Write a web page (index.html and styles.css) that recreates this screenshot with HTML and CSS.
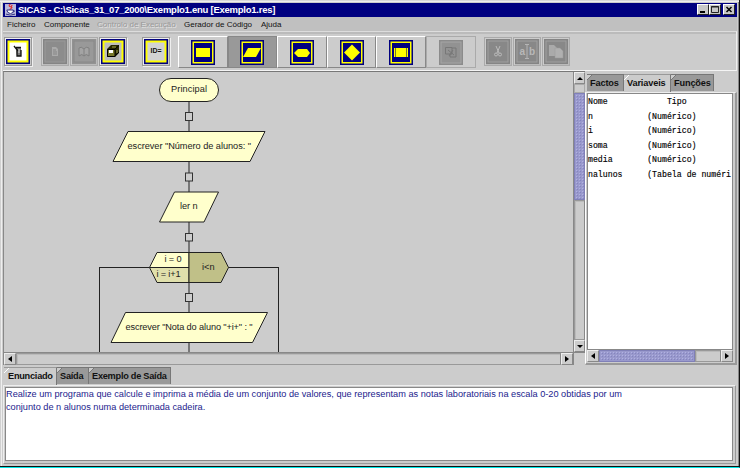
FILE: index.html
```html
<!DOCTYPE html>
<html lang="pt">
<head>
<meta charset="utf-8">
<title>SICAS</title>
<link rel="stylesheet" href="styles.css">
</head>
<body>
<div class="window">
  <header class="titlebar">
    <svg class="logo" width="12" height="13" viewBox="0 0 12 13"><rect width="12" height="13" fill="#b9b9dc"/><path d="M6 0Q3 2 6 3T5 6M8 1Q6 3 8 4" fill="none" stroke="#e03030" stroke-width="1.2"/><path d="M2 6.500H9V9Q6 12 3 9ZM9 7Q12 7 9 9M1 11Q6 13 11 11" fill="#fff" stroke="#22227c"/></svg>
    <h1>SICAS - C:\Sicas_31_07_2000\Exemplo1.enu [Exemplo1.res]</h1>
    <div class="controls">
      <button><svg width="10" height="9"><path d="M2 7H7" stroke="#000" stroke-width="2"/></svg></button>
      <button><svg width="10" height="9"><path d="M1.500 1.500H8.500V7.500H1.500ZM1 2H9" fill="none" stroke="#222"/></svg></button>
      <button class="close"><svg width="10" height="9"><path d="M2.500 2L7.500 7M7.500 2L2.500 7" stroke="#000" stroke-width="1.500"/></svg></button>
    </div>
  </header>
  <nav class="menu"><span class="m1">Ficheiro</span><span class="m2">Componente</span><span class="m3 off">Controlo de Execução</span><span class="m4">Gerador de Código</span><span>Ajuda</span></nav>

  <div class="toolbar">
    <button class="tool"><svg width="24" height="25"><rect width="24" height="25" fill="#000080"/><rect x="1.500" y="1.500" width="21" height="22" fill="#ff0"/><rect x="3.500" y="3.500" width="17" height="18" fill="#fff"/><path d="M10 9H15V17H11Z" fill="#777"/><path d="M8 7L12 12M10 8.500H15M11 10V17H15V11" stroke="#111" stroke-width="1.300" fill="none"/><path d="M12 11H14M12 13H14" stroke="#ddd"/></svg></button>
    <button class="tool off g1"><svg width="24" height="25"><rect width="24" height="25" fill="#848484"/><rect x="2" y="2" width="20" height="21" fill="#8c8c8c" stroke="#999"/><path d="M9 8H13L15 10V17H9Z" fill="#aaa"/><path d="M10 11H13M10 13H14M10 15H14" stroke="#858585"/></svg></button>
    <button class="tool off g2"><svg width="24" height="25"><rect width="24" height="25" fill="#929292"/><rect x="2" y="2" width="20" height="21" fill="#999" stroke="#898989"/><path d="M7 9Q9 7 12 10Q14 7 17 9V17Q14 14 12 17Q10 14 7 17ZM12 10V17" fill="#a4a4a4" stroke="#808080"/></svg></button>
    <button class="tool g2"><svg width="24" height="25"><rect width="24" height="25" fill="#000080"/><rect x="1.500" y="1.500" width="21" height="22" fill="#ff0"/><rect x="3.500" y="3.500" width="17" height="18" fill="#bdbdbd"/><path d="M6 10L10 6H18V14L14 18H6Z" fill="#282800"/><path d="M6.500 10.500H14V17.500H6.500ZM14 10L18 6.500M14 17L18 13" fill="#77772a" stroke="#000"/><path d="M8 11H12V14H8Z" fill="#fff"/><path d="M11 8H15M16 11V14" stroke="#a0a050"/></svg></button>
    <button class="tool g3"><svg width="24" height="25"><rect width="24" height="25" fill="#000080"/><rect x="1.500" y="1.500" width="21" height="22" fill="#ff0"/><rect x="3.500" y="3.500" width="17" height="18" fill="#d2d2d2"/><text x="6.500" y="14" class="idtext" textLength="11" lengthAdjust="spacingAndGlyphs">ID=</text></svg></button>

    <div class="shapes">
      <button class="shape"><svg width="24" height="25"><rect width="24" height="25" fill="#000080"/><rect x="2.250" y="2.250" width="19.500" height="20.500" fill="none" stroke="#ff0" stroke-width="1.500"/><path d="M5 8H19V17H5Z" fill="#ff0"/></svg></button>
      <button class="shape pressed"><svg width="24" height="25"><rect width="24" height="25" fill="#000080"/><rect x="2.250" y="2.250" width="19.500" height="20.500" fill="none" stroke="#ff0" stroke-width="1.500"/><path d="M8 8H21L16 17H3Z" fill="#ff0"/></svg></button>
      <button class="shape"><svg width="24" height="25"><rect width="24" height="25" fill="#000080"/><rect x="2.250" y="2.250" width="19.500" height="20.500" fill="none" stroke="#ff0" stroke-width="1.500"/><path d="M4 13L8 9H17L20 13L17 17H8Z" fill="#ff0"/></svg></button>
      <button class="shape"><svg width="24" height="25"><rect width="24" height="25" fill="#000080"/><rect x="2.250" y="2.250" width="19.500" height="20.500" fill="none" stroke="#ff0" stroke-width="1.500"/><path d="M12 4.500L20 12.500L12 20.500L4 12.500Z" fill="#ff0"/></svg></button>
      <button class="shape"><svg width="24" height="25"><rect width="24" height="25" fill="#000080"/><rect x="2.250" y="2.250" width="19.500" height="20.500" fill="none" stroke="#ff0" stroke-width="1.500"/><path d="M5 8H19V17H5Z" fill="#ff0"/><path d="M6.500 8V17M17.500 8V17" stroke="#77772a"/></svg></button>
      <button class="shape flat"><svg width="24" height="25"><rect width="24" height="25" fill="#8b8b8b"/><rect x="2" y="2" width="20" height="21" fill="#929292" stroke="#a5a5a5"/><path d="M6.500 7.500H13V14H6.500ZM13 8H17V17H11V14M9 10L15 15M14 10L10 16" fill="none" stroke="#777"/></svg></button>
    </div>

    <button class="tool off g4"><svg width="24" height="25"><rect width="24" height="25" fill="#848484"/><rect x="2" y="2" width="20" height="21" fill="#888" stroke="#a0a0a0"/><path d="M10 7L13 14M14 7L11 14" stroke="#bbb" fill="none"/><circle cx="10" cy="15.500" r="1.500" fill="none" stroke="#bbb"/><circle cx="14" cy="15.500" r="1.500" fill="none" stroke="#bbb"/></svg></button>
    <button class="tool off g2"><svg width="24" height="25"><rect width="24" height="25" fill="#848484"/><rect x="2" y="2" width="20" height="21" fill="#888" stroke="#a0a0a0"/><text x="4.500" y="16" class="abtext">a</text><text x="14" y="16" class="abtext">b</text><path d="M10 5.500H14M12 5.500V19.500M10 19.500H14" stroke="#b5b5b5"/></svg></button>
    <button class="tool off g5"><svg width="24" height="25"><rect width="24" height="25" fill="#848484"/><rect x="2" y="2" width="20" height="21" fill="#888" stroke="#a0a0a0"/><path d="M5 6H10L13 9V17H5Z" fill="#aaa"/><path d="M11 9H16L19 12V19H11Z" fill="#b0b0b0" stroke="#999" stroke-width=".5"/></svg></button>
  </div>

  <main class="work">
    <section class="editor">
      <svg class="flow" width="569" height="280" viewBox="4 72 569 280">
        <g class="wire"><path d="M189 101V352"/><path class="crisp" d="M99.500 352V267.500H150M228 267.500H278.500V352"/></g>
        <g class="node">
          <rect x="159.500" y="78.500" width="59" height="23" rx="11.500"/>
          <path d="M128 131.500H265L250 161.500H113Z"/>
          <path d="M174.500 192H218.500L204 222H159.500Z"/>
          <path d="M125.500 312.500H267.500L252.500 342.500H111Z"/>
          <path d="M157 252.500H189V267.500H149.500Z"/>
          <path class="mid" d="M149.500 267.500H189V282.500H157Z"/>
          <path class="dark" d="M189 252.500H221L228.500 267.500L221 282.500H189Z"/>
        </g>
        <g class="joint"><rect x="185.500" y="112.500" width="7" height="8"/><rect x="185.500" y="173" width="7" height="8"/><rect x="185.500" y="233.500" width="7" height="7.500"/><rect x="185.500" y="293.500" width="7" height="8"/></g>
        <g class="label">
          <text x="171" y="92" textLength="36">Principal</text>
          <text x="127.500" y="149" textLength="123.500">escrever "Número de alunos: "</text>
          <text x="180" y="209" textLength="17.500">ler n</text>
          <text x="164.500" y="262" textLength="17">i = 0</text>
          <text x="156.500" y="277" textLength="24">i = i+1</text>
          <text x="202" y="269.500" textLength="12.500">i&lt;n</text>
          <text x="125.500" y="330" textLength="127">escrever "Nota do aluno "+i+" : "</text>
        </g>
      </svg>
      <div class="vbar"><i class="arrow up"></i><i class="gap"></i><i class="thumb"></i><i class="track"></i><i class="arrow down"></i></div>
      <div class="hbar"><i class="arrow left"></i><i class="track"></i><i class="arrow right"></i></div>
      <div class="corner"></div>
    </section>

    <aside class="side">
      <div class="tabs"><span class="tab t1">Factos</span><span class="tab on t2">Variaveis</span><span class="tab t3">Funções</span></div>
      <div class="sheet">
        <div class="list">
<pre>Nome            <b class="tipo">Tipo</b>
n           (Numérico)
i           (Numérico)
soma        (Numérico)
media       (Numérico)
nalunos     (Tabela de numéri</pre>
        </div>
        <div class="hbar"><i class="arrow left"></i><i class="thumb"></i><i class="track"></i><i class="arrow right"></i></div>
      </div>
    </aside>
  </main>

  <section class="output">
    <div class="tabs"><span class="tab on b1">Enunciado</span><span class="tab b2">Saída</span><span class="tab b3">Exemplo de Saída</span></div>
    <div class="sheet"><p>Realize um programa que calcule e imprima a média de um conjunto de valores, que representam as notas laboratoriais na escala 0-20 obtidas por um<br>conjunto de n alunos numa determinada cadeira.</p></div>
  </section>
</div>
</body>
</html>
```
FILE: styles.css
```css
* { box-sizing: border-box; }
body { margin: 0; width: 742px; height: 469px; overflow: hidden; background: #fff; font-family: "Liberation Sans", Arial, sans-serif; font-size: 9px; color: #111; }
button { margin: 0; padding: 0; font: inherit; }
svg { display: block; flex: none; }

.window { width: 740px; height: 468px; display: flex; flex-direction: column; background: #ccc; padding: 3px 2px 0 3px; border-right: 1px solid #111; border-bottom: 1px solid #00e8e8; box-shadow: inset 0 -1px #111, inset 0 1px #d8d8d8, inset 0 2px #eee, inset -1px 0 #888, inset 1px 0 #d0d0d0, inset 2px 0 #eee; }

.titlebar { height: 14px; flex: none; display: flex; align-items: center; background: #000080; padding: 0 2px 1px 2px; }
.logo { width: 11px; height: 12px; }
.titlebar h1 { margin: 0 auto 0 2px; color: #fff; font-size: 9.5px; line-height: 13px; font-weight: bold; white-space: pre; letter-spacing: -.25px; }
.controls { display: flex; }
.controls button { width: 12px; height: 11px; background: #c8c8c8; border: 1px solid; border-color: #fff #222 #222 #fff; }
.controls .close { margin-left: 2px; }

.menu { height: 14px; flex: none; display: flex; padding-left: 4px; background: #c0c0c0; font-size: 8px; line-height: 15px; white-space: pre; }
.menu .m1 { width: 37px; }
.menu .m2 { width: 53px; }
.menu .m3 { width: 87px; }
.menu .m4 { width: 77px; }
.menu .off { color: #999; text-shadow: 1px 1px #e4e4e4; }

.toolbar { height: 40px; flex: none; display: flex; align-items: flex-start; padding: 4px 0 0 1px; border-top: 1px solid #ddd; border-right: 1px solid #eee; border-bottom: 1px solid #f4f4f4; box-shadow: inset 0 2px #bbb; }
.tool { width: 28px; height: 29px; margin-top: 1px; display: grid; place-items: center; background: #c8c8c8; border: 1px solid #999; box-shadow: inset 1px 1px #eee, 1px 1px #eee; }
.tool.off { background: #bbb; border-color: #aaa; box-shadow: inset 1px 1px #ccc; }
.g1 { margin-left: 9px; }
.g2 { margin-left: 1px; }
.g3 { margin-left: 15px; }
.g4 { margin-left: 8px; }
.g5 { margin-left: 1px; }
.idtext { font-size: 7px; font-weight: bold; fill: #111; }
.abtext { font-size: 10px; font-weight: bold; fill: #b8b8b8; }
.shapes { display: flex; margin-left: 8px; }
.shape { width: 49.6px; height: 32px; display: grid; place-items: center; background: #ccc; border: 1px solid; border-color: #fff #888 #888 #fff; }
.shape.pressed { background: #999; border-color: #888; }
.shape.flat { border-color: #aaa; }

.work { height: 294px; flex: none; display: flex; }
.editor { width: 582px; display: grid; grid-template: 280px 13px / 569px 12px; border-top: 1px solid #777; border-left: 1px solid #888; }
.flow { width: 569px; height: 280px; }
.wire path { fill: none; stroke: #222; }
.crisp { shape-rendering: crispEdges; }
.node rect, .node path { fill: #ffffcc; stroke: #222; }
.node .mid { fill: #e0e0ac; }
.node .dark { fill: #c0c088; }
.joint rect { fill: #ccc; stroke: #333; }
.label text { font-size: 9.2px; fill: #222; }

.arrow { display: grid; place-items: center; flex: none; width: 12px; height: 12px; background: #ccc; border: 1px solid; border-color: #eee #888 #888 #eee; }
.arrow::before { content: ""; border: 3px solid transparent; }
.up::before { border-bottom-color: #000; border-top: 0; }
.down::before { border-top-color: #000; border-bottom: 0; }
.left::before { border-right: 4px solid #000; border-left: 0; }
.right::before { border-left: 4px solid #000; border-right: 0; }
.track { flex: 1; border: 1px solid #999; border-right-color: #888; box-shadow: inset 1px 1px #bbb; }
.vbar { display: flex; flex-direction: column; border-left: 1px solid #888; }
.vbar .arrow { width: 11px; }
.vbar .gap { height: 9px; border: 1px solid #aaa; }
.thumb { background-color: #9999cc; background-image: radial-gradient(circle, #b0b0e4 35%, transparent 36%), radial-gradient(circle, #8484c0 35%, transparent 36%); background-size: 3px 3px; background-position: 0 0, 1px 1px; border: 1px solid #8080b8; }
.vbar .thumb { height: 107px; }
.hbar { height: 13px; display: flex; border-top: 1px solid #888; }
.corner { border-top: 1px solid #888; border-left: 1px solid #888; }

.side { width: 152px; padding-top: 3px; display: flex; flex-direction: column; }
.tabs { display: flex; height: 18px; flex: none; }
.tab { flex: none; height: 17px; padding-left: 3px; background: linear-gradient(135deg, #ccc 3px, #777 3px, #777 4px, #999 4px); border-top: 1px solid #777; border-right: 1px solid #777; font-size: 9.2px; line-height: 17px; font-weight: bold; white-space: pre; letter-spacing: -.15px; }
.tab.on { height: 19px; background: linear-gradient(135deg, #ccc 3px, #fff 3px, #fff 4px, #ccc 4px); border-top-color: #999; }
.side .tabs { padding-left: 2px; }
.t1 { width: 37px; }
.t2 { width: 47px; }
.t3 { width: 43px; }
.side .sheet { flex: 1; display: flex; flex-direction: column; border-left: 1px solid #fff; border-right: 2px solid #999; border-bottom: 2px solid #999; border-top: 1px solid #eee; padding: 0 2px 1px 1px; }
.list { flex: 1; min-height: 0; overflow: hidden; background: #fff; border: 1px solid #888; border-bottom: 0; }
.list pre { margin: 1px 0 0 0; font: 8.220px/14.500px "Liberation Mono", monospace; color: #000; -webkit-text-stroke: .15px #000; }
.tipo { font-weight: normal; }
.side .thumb { width: 96px; }

.output { flex: 1; min-height: 0; padding: 2px 0 3px 0; display: flex; flex-direction: column; }
.output .tabs { padding-left: 1px; }
.output .tab { letter-spacing: -.25px; }
.b1 { width: 53px; padding-left: 4px; }
.b2 { width: 32px; }
.b3 { width: 82px; }
.output .sheet { flex: 1; margin-right: 1px; padding: 1px 2px 2px 1px; border: 1px solid #eee; border-right-color: #999; border-bottom-color: #999; display: flex; }
.output p { flex: 1; margin: 0; background: #fff; border: 1px solid #888; font-size: 9.2px; line-height: 13px; color: #22228c; white-space: nowrap; }
```
